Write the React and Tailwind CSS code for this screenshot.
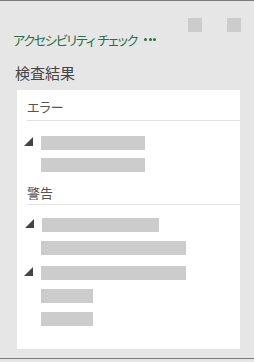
import React from 'react';

const jp = "font-['Noto_Sans_CJK_JP',sans-serif] [font-feature-settings:'palt']";

function Tri() {
  return (
    <svg width="9" height="9" viewBox="0 0 9 9" className="absolute left-[-17px] top-[1px]">
      <polygon points="9,0 9,9 0,9" fill="#444444" />
    </svg>
  );
}

function Bar({ w, tri, className = '' }) {
  return (
    <div className={`relative h-[14px] bg-[#cccccc] ${className}`} style={{ width: w }}>
      {tri && <Tri />}
    </div>
  );
}

function Section({ title, head, children }) {
  return (
    <div>
      <div className={`ml-[10px] border-b border-[#e2e2e2] flex items-center ${head}`}>
        <span className={`${jp} text-[13px] text-[#555555] leading-none`}>{title}</span>
      </div>
      <div className="pl-[24px]">{children}</div>
    </div>
  );
}

export default function App() {
  return (
    <div className="w-[254px] h-[362px] bg-[#e6e6e6] pb-[3px]">
      <div className="h-full border-t border-b border-[#7a7a7a] relative">
        <div className="flex justify-end gap-[25px] pr-[13px] pt-[17px]">
          <div className="w-[14px] h-[14px] bg-[#cccccc]" />
          <div className="w-[14px] h-[14px] bg-[#cccccc]" />
        </div>
        <div className={`${jp} flex items-center pl-[13px] h-[16px] mt-[-1px] text-[13px] leading-none tracking-[-1.2px] text-[#217346]`}>
          <span>アクセシビリティ</span>
          <span className="ml-[3px]">チェック</span>
          <div className="flex gap-[1.5px] ml-[7px] mt-[1px]">
            <div className="w-[3px] h-[3px] rounded-full bg-[#217346]" />
            <div className="w-[3px] h-[3px] rounded-full bg-[#217346]" />
            <div className="w-[3px] h-[3px] rounded-full bg-[#217346]" />
          </div>
        </div>
        <div className={`${jp} pl-[15px] mt-[18px] text-[15px] leading-none text-[#444444]`}>検査結果</div>
        <div className="ml-[17px] mt-[10px] w-[223px] h-[259px] bg-white pt-[1px]">
          <Section title="エラー" head="h-[30px] pt-[2px]">
            <div className="pt-[15px] pb-[8px]">
              <Bar w={104} tri />
              <Bar w={104} className="mt-[8px]" />
            </div>
          </Section>
          <Section title="警告" head="h-[25px]">
            <div className="pt-[13px]">
              <Bar w={117} tri className="ml-[1px]" />
              <Bar w={145} className="mt-[9px]" />
              <Bar w={145} tri className="mt-[11px]" />
              <Bar w={52} className="mt-[9px]" />
              <Bar w={52} className="mt-[9px]" />
            </div>
          </Section>
        </div>
      </div>
    </div>
  );
}
